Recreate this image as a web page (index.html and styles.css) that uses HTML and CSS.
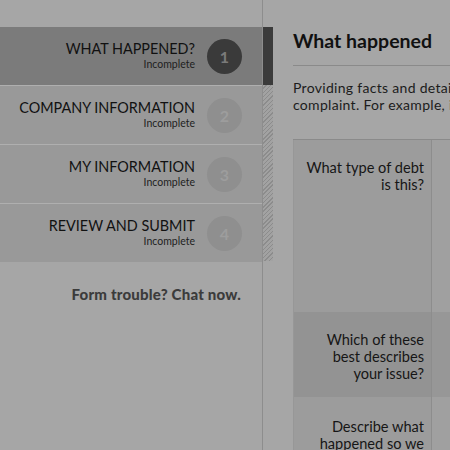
FILE: index.html
```html
<!DOCTYPE html>
<html>
<head>
<meta charset="utf-8">
<link rel="stylesheet" href="styles.css">
</head>
<body>
<div class="layout">
  <aside class="sidebar">
    <nav class="steps">
      <div class="step step-active">
        <div class="step-text"><div class="step-title">WHAT HAPPENED?</div><div class="step-status">Incomplete</div></div>
        <div class="step-num">1</div>
      </div>
      <div class="step">
        <div class="step-text"><div class="step-title">COMPANY INFORMATION</div><div class="step-status">Incomplete</div></div>
        <div class="step-num">2</div>
      </div>
      <div class="step">
        <div class="step-text"><div class="step-title">MY INFORMATION</div><div class="step-status">Incomplete</div></div>
        <div class="step-num">3</div>
      </div>
      <div class="step">
        <div class="step-text"><div class="step-title">REVIEW AND SUBMIT</div><div class="step-status">Incomplete</div></div>
        <div class="step-num">4</div>
      </div>
    </nav>
    <div class="help">Form trouble? Chat now.</div>
  </aside>
  <div class="rail">
    <div class="rail-active"></div>
    <div class="rail-hatch"></div>
  </div>
  <main class="main">
    <h1 class="title">What happened</h1>
    <p class="intro">Providing facts and details about what happened helps us handle your<br>complaint. For example, include dates, amounts and names.</p>
    <div class="qtable">
      <div class="qrow qrow-1">
        <div class="qlabel">What type of debt is this?</div>
        <div class="qfield"></div>
      </div>
      <div class="qrow qrow-2">
        <div class="qlabel">Which of these best describes your issue?</div>
        <div class="qfield"></div>
      </div>
      <div class="qrow qrow-3">
        <div class="qlabel">Describe what happened so we can understand</div>
        <div class="qfield"></div>
      </div>
    </div>
  </main>
</div>
</body>
</html>
```
FILE: styles.css
```css
html, body {
  margin: 0;
  padding: 0;
  width: 450px;
  height: 450px;
  overflow: hidden;
  background: #a6a6a6;
  font-family: Lato, "Open Sans", sans-serif;
}
.layout {
  display: flex;
  height: 450px;
}
.sidebar {
  flex: none;
  width: 262px;
  border-right: 1px solid #8d8d8d;
  padding-top: 27px;
}
.steps {
  display: flex;
  flex-direction: column;
}
.step {
  height: 58px;
  display: flex;
  align-items: center;
  justify-content: flex-end;
  gap: 12px;
  padding-right: 20px;
  padding-bottom: 3px;
  box-sizing: border-box;
  background: #999999;
  border-top: 1px solid #afafaf;
}
.step:first-child {
  border-top: 0;
}
.step-active {
  background: #7b7b7b;
}
.step + .step {
  height: 59px;
}
.step-text {
  text-align: right;
}
.step-title {
  font-size: 14.4px;
  line-height: 17px;
  color: #111;
}
.step-status {
  font-size: 10.5px;
  line-height: 12px;
  color: #1e1e1e;
  margin-top: 1px;
}
.step-num {
  flex: none;
  width: 35px;
  height: 35px;
  border-radius: 50%;
  background: #8f8f8f;
  color: #9d9d9d;
  font-weight: 700;
  font-size: 16px;
  display: flex;
  align-items: center;
  justify-content: center;
  margin-top: 3px;
}
.step-active .step-num {
  background: #3a3a3a;
  color: #7a7a7a;
}
.help {
  margin-top: 24px;
  padding-right: 21px;
  text-align: right;
  font-size: 15px;
  line-height: 17px;
  font-weight: 900;
  letter-spacing: 0.2px;
  color: #3b3b3b;
}
.rail {
  flex: none;
  width: 10px;
  padding-top: 27px;
  display: flex;
  flex-direction: column;
}
.rail-active {
  height: 58px;
  background: #3b3b3b;
}
.rail-hatch {
  height: 176px;
  background: repeating-linear-gradient(135deg, #a2a2a2 0 2px, #8c8c8c 2px 3px);
}
.main {
  flex: none;
  width: 620px;
  padding: 29px 0 0 20px;
}
.title {
  margin: 0;
  font-size: 19.5px;
  line-height: 24px;
  font-weight: 700;
  color: #111;
  padding-bottom: 12px;
  border-bottom: 1px solid #8a8a8a;
}
.intro {
  margin: 13px 0 0;
  font-size: 14px;
  line-height: 17px;
  letter-spacing: 0.3px;
  color: #1c1c1c;
}
.qtable {
  margin-top: 26px;
  border-top: 1px solid #8a8a8a;
}
.qrow {
  display: grid;
  grid-template-columns: 139px 1fr;
  background: #a0a0a0;
}
.qrow-1 { height: 172px; }
.qrow-2 { height: 85px; background: #979797; }
.qrow-3 { height: 120px; }
.qlabel {
  background: #9c9c9c;
  border-left: 1px solid #979797;
  border-right: 1px solid #8d8d8d;
  padding: 19px 7px 0 8px;
  text-align: right;
  font-size: 14.6px;
  line-height: 17px;
  color: #161616;
}
.qrow-2 .qlabel {
  background: #939393;
}
.qrow-3 .qlabel {
  padding-top: 21px;
}
```
